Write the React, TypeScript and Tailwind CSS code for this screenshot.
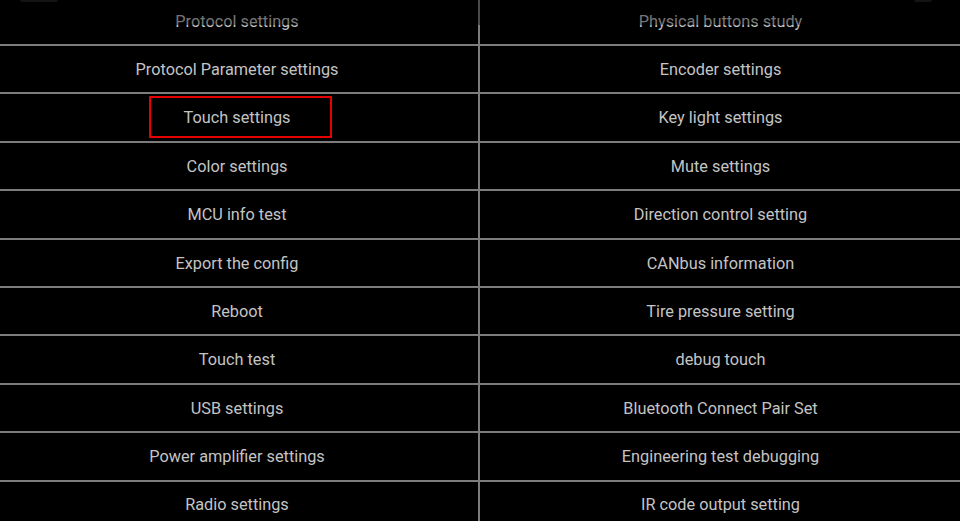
const left = [
  "Protocol settings",
  "Protocol Parameter settings",
  "Touch settings",
  "Color settings",
  "MCU info test",
  "Export the config",
  "Reboot",
  "Touch test",
  "USB settings",
  "Power amplifier settings",
  "Radio settings",
];

const right = [
  "Physical buttons study",
  "Encoder settings",
  "Key light settings",
  "Mute settings",
  "Direction control setting",
  "CANbus information",
  "Tire pressure setting",
  "debug touch",
  "Bluetooth Connect Pair Set",
  "Engineering test debugging",
  "IR code output setting",
];

export default function App() {
  return (
    <div
      className="relative w-[960px] h-[521px] bg-black overflow-hidden text-[16.3px] text-[#c4c4c4]"
      style={{ fontFamily: "Roboto, 'Liberation Sans', sans-serif" }}
    >
      <div className="-mt-[2.4px]">
        {left.map((l, i) => (
          <div
            key={l}
            className="flex h-[48.4px] border-b-2 border-[#7c7c7c]"
          >
            <div className="flex-1 flex items-center justify-center pr-[4px] pt-[2px]">
              <span className="relative">
                {l}
                {i === 2 && (
                  <span className="absolute top-1/2 left-1/2 -mt-[22.5px] -ml-[88px] w-[183px] h-[42px] border-2 border-[#e60000]" />
                )}
              </span>
            </div>
            <div className="w-[2px] bg-[#7c7c7c]" />
            <div className="w-[480px] flex items-center justify-center pl-[1px] pt-[2px]">
              {right[i]}
            </div>
          </div>
        ))}
      </div>

      {/* status bar fade at the top edge */}
      <div className="absolute top-0 left-0 right-0 h-[25px] bg-black/40" />
      <div className="absolute top-0 left-[20px] w-[38px] h-[2px] rounded-b bg-[#141414]" />
      <div className="absolute top-0 left-[914px] w-[18px] h-[2px] rounded-b bg-[#141414]" />
    </div>
  );
}
